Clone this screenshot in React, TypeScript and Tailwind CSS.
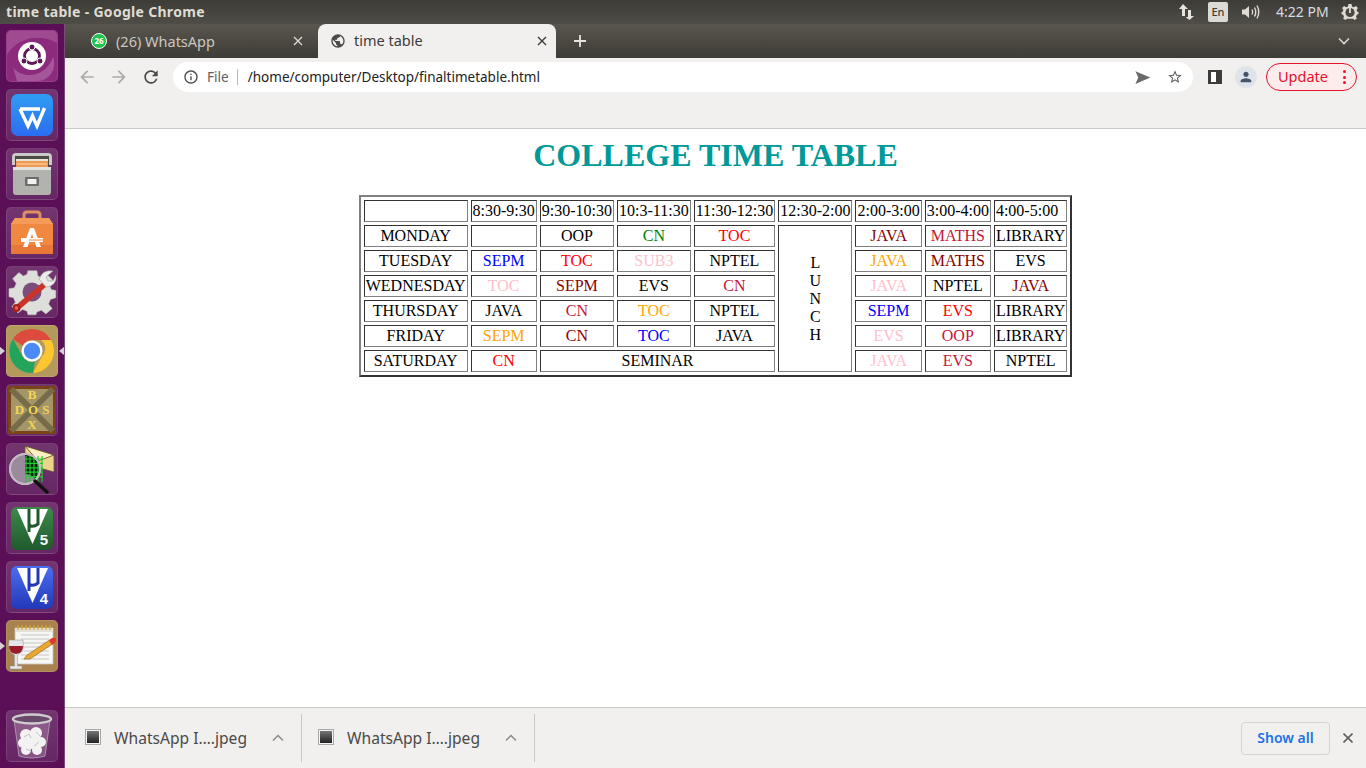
import React from 'react';

const BLACK = 'text-black';
const RED = 'text-[#ff0000]';
const BLUE = 'text-[#0000ff]';
const PINK = 'text-[#ffc0cb]';
const ORANGE = 'text-[#ffa500]';
const GREEN = 'text-[#008000]';
const CRIMSON = 'text-[#c4163a]';
const DARKRED = 'text-[#8b0000]';

const cellBase =
  'border border-t-[#333333] border-l-[#333333] border-r-[#808080] border-b-[#808080] p-px text-center align-middle';

type Cell = { t: string; c: string; span?: number };

const header = ['', '8:30-9:30', '9:30-10:30', '10:3-11:30', '11:30-12:30', '12:30-2:00', '2:00-3:00', '3:00-4:00', '4:00-5:00'];

const before: Cell[][] = [
  [{ t: 'MONDAY', c: BLACK }, { t: '', c: BLACK }, { t: 'OOP', c: BLACK }, { t: 'CN', c: GREEN }, { t: 'TOC', c: RED }],
  [{ t: 'TUESDAY', c: BLACK }, { t: 'SEPM', c: BLUE }, { t: 'TOC', c: RED }, { t: 'SUB3', c: PINK }, { t: 'NPTEL', c: BLACK }],
  [{ t: 'WEDNESDAY', c: BLACK }, { t: 'TOC', c: PINK }, { t: 'SEPM', c: DARKRED }, { t: 'EVS', c: BLACK }, { t: 'CN', c: CRIMSON }],
  [{ t: 'THURSDAY', c: BLACK }, { t: 'JAVA', c: BLACK }, { t: 'CN', c: CRIMSON }, { t: 'TOC', c: ORANGE }, { t: 'NPTEL', c: BLACK }],
  [{ t: 'FRIDAY', c: BLACK }, { t: 'SEPM', c: ORANGE }, { t: 'CN', c: DARKRED }, { t: 'TOC', c: BLUE }, { t: 'JAVA', c: BLACK }],
  [{ t: 'SATURDAY', c: BLACK }, { t: 'CN', c: RED }, { t: 'SEMINAR', c: BLACK, span: 3 }],
];

const after: Cell[][] = [
  [{ t: 'JAVA', c: DARKRED }, { t: 'MATHS', c: CRIMSON }, { t: 'LIBRARY', c: BLACK }],
  [{ t: 'JAVA', c: ORANGE }, { t: 'MATHS', c: DARKRED }, { t: 'EVS', c: BLACK }],
  [{ t: 'JAVA', c: PINK }, { t: 'NPTEL', c: BLACK }, { t: 'JAVA', c: DARKRED }],
  [{ t: 'SEPM', c: BLUE }, { t: 'EVS', c: RED }, { t: 'LIBRARY', c: BLACK }],
  [{ t: 'EVS', c: PINK }, { t: 'OOP', c: CRIMSON }, { t: 'LIBRARY', c: BLACK }],
  [{ t: 'JAVA', c: PINK }, { t: 'EVS', c: CRIMSON }, { t: 'NPTEL', c: BLACK }],
];

const Md = ({ d, size = 24, className = '' }: { d: string; size?: number; className?: string }) => (
  <svg width={size} height={size} viewBox="0 0 24 24" className={className} fill="currentColor">
    <path d={d} />
  </svg>
);

const Tile = ({ children, gold, pink }: { children: React.ReactNode; gold?: string; pink?: boolean }) => (
  <div
    className={
      'w-[52px] h-[52px] rounded-[5px] overflow-hidden border border-white/10 shrink-0 ' +
      (gold === 'chrome'
        ? 'bg-[#b39a5c]'
        : gold === 'note'
          ? 'bg-[#a9824f]'
          : pink
            ? 'bg-[#8c2a7c]'
            : 'bg-gradient-to-b from-[#733570] to-[#662765]')
    }
  >
    <svg width="50" height="50" viewBox="0 0 50 50">
      {children}
    </svg>
  </div>
);

const DashIcon = () => (
  <>
    <path d="M0 24 C10 6 34 2 50 12 V0 H0 Z" fill="#a04a92" />
    <path d="M6 36 C14 48 38 48 46 26 C50 36 44 50 30 50 H10 Z" fill="#a5559a" />
    <circle cx="25" cy="25" r="14" fill="#fff" />
    <circle cx="25" cy="25" r="7.5" fill="none" stroke="#5e1a58" strokeWidth="2.8" />
    <circle cx="25" cy="16" r="3" fill="#5e1a58" stroke="#fff" strokeWidth="1" />
    <circle cx="17" cy="30" r="3" fill="#5e1a58" stroke="#fff" strokeWidth="1" />
    <circle cx="33" cy="30" r="3" fill="#5e1a58" stroke="#fff" strokeWidth="1" />
  </>
);

const WpsIcon = () => (
  <>
    <defs>
      <linearGradient id="wps" x1="0" y1="0" x2="0" y2="1">
        <stop offset="0" stopColor="#2f9df4" />
        <stop offset="1" stopColor="#2b6df0" />
      </linearGradient>
    </defs>
    <rect x="4" y="4" width="42" height="42" rx="7" fill="url(#wps)" />
    <path d="M13 19 H33 M13 19 L21 36 L25.5 26 L30 36 L37.5 18" fill="none" stroke="#fff" strokeWidth="3.4" strokeLinejoin="miter" />
  </>
);

const FilesIcon = () => (
  <>
    <path d="M5 8 Q5 4 9 4 H41 Q45 4 45 8 V16 H5 Z" fill="#c9c9c6" />
    <rect x="8" y="7" width="34" height="12" fill="#4c4a47" />
    <rect x="9" y="10" width="32" height="7" fill="#e9e4d8" />
    <rect x="9" y="12" width="32" height="7" fill="#ee9a53" />
    <rect x="10" y="14.5" width="30" height="1" fill="#ffd9ad" />
    <path d="M6 21 H44 V43 Q44 46 41 46 H9 Q6 46 6 43 Z" fill="#b2b2ae" />
    <rect x="6" y="18" width="38" height="3" fill="#e2e2e0" />
    <rect x="18" y="28" width="14" height="9" rx="1" fill="#6d6d6b" />
    <rect x="20.5" y="30" width="9" height="5" rx="0.5" fill="#f1f1f0" />
  </>
);

const BagIcon = () => (
  <>
    <path d="M17 13 V7 Q17 4 20 4 H30 Q33 4 33 7 V13" fill="none" stroke="#e0905f" strokeWidth="3" />
    <path d="M8 10 H42 L46 16 V46 H4 V16 Z" fill="#f0883f" />
    <path d="M4 37 H46 V46 H4 Z" fill="#e8773a" />
    <path d="M8 10 H42 L46 16 H4 Z" fill="#f39a58" />
    <path d="M23 20 H27 L34 39 H29.5 L25 26 L20.5 39 H16 Z" fill="#fff" />
    <path d="M14 30 H36 V34 H14 Z" fill="#fff" />
    <path d="M22 31.4 H36 V32.4 H22 Z" fill="#ee8440" />
  </>
);

const ToolsIcon = () => (
  <>
    <path
      d="M21 3 H31 L32 9 L37 11 L42 7 L49 14 L45 19 L47 24 L52 25 V33 L46 35 L44 40 L48 45 L41 51 L36 47 L31 49 L30 52 H21 L20 48 L15 46 L10 50 L3 43 L7 38 L5 33 L0 32 V23 L6 22 L8 17 L4 12 L11 5 L16 9 L20 7 Z"
      fill="#dededa"
      stroke="#bcbcb8"
      strokeWidth="0.6"
      transform="translate(2 1) scale(0.9)"
    />
    <circle cx="25" cy="25" r="9.5" fill="#7c4c7c" />
    <path d="M36 15 L8 39 L12 43 L40 19 Z" fill="#c8342b" />
    <circle cx="9.5" cy="41" r="4" fill="#a8201c" />
    <circle cx="9.5" cy="41" r="1.7" fill="#e86a60" />
    <path d="M32 12 Q36 2 46 4 L39 10 L41 14 L46 14 L49 8 Q50 19 39 20 Z" fill="#ececea" stroke="#9a9a98" strokeWidth="0.6" />
  </>
);

const ChromeIcon = () => (
  <>
    <path d="M25 3 A22 22 0 0 1 44 14 H25 A11 11 0 0 0 15.4 19.6 L6 13 A22 22 0 0 1 25 3 Z" fill="#dc4b3e" />
    <path d="M44 14 A22 22 0 0 1 26 47 L35 30.5 A11 11 0 0 0 34 14 Z" fill="#fbc62f" />
    <path d="M26 47 A22 22 0 0 1 6 13 L15.6 30.5 A11 11 0 0 0 28 35.6 Z" fill="#22a55b" />
    <circle cx="25" cy="25" r="10.5" fill="#fff" />
    <circle cx="25" cy="25" r="8.2" fill="#4a8af4" />
  </>
);

const DosIcon = () => (
  <>
    <rect x="1" y="1" width="48" height="48" fill="#7d4318" />
    <rect x="4" y="4" width="42" height="42" fill="#a5966a" />
    <path d="M4 4 L46 46 M46 4 L4 46" stroke="#766c4a" strokeWidth="6" />
    <g fontFamily="Liberation Serif" fontWeight="700" fontSize="13" fill="#f5d44e" textAnchor="middle">
      <text x="25" y="14">B</text>
      <text x="27" y="29" letterSpacing="4">DOS</text>
      <text x="25" y="44">X</text>
    </g>
  </>
);

const MailIcon = () => {
  const lines = [];
  for (let i = 0; i < 5; i++) {
    lines.push(<path key={'v' + i} d={`M${19 + i * 4} 12 V38`} stroke="#19d02a" strokeWidth="1.2" />);
    lines.push(<path key={'h' + i} d={`M18 ${15 + i * 4.4} H36`} stroke="#19d02a" strokeWidth="1.2" />);
  }
  return (
    <>
      <path d="M18 2 L47 11 V28 L18 20 Z" fill="#efd28c" stroke="#6a5a2a" strokeWidth="0.8" />
      <path d="M18 2 L47 11 L31 17 Z" fill="#fbeec4" stroke="#5a4a20" strokeWidth="0.8" />
      <circle cx="18" cy="25" r="15" fill="#9a8a9c" stroke="#c4bac4" strokeWidth="2" />
      <path d="M18 11 A14 14 0 0 1 28 35 Q24 30 18 30 Z" fill="#062006" />
      <g>{lines}</g>
      <circle cx="18" cy="25" r="15" fill="none" stroke="#c4bac4" strokeWidth="2" />
      <path d="M28 37 L40 48" stroke="#111" strokeWidth="3.5" strokeLinecap="round" />
    </>
  );
};

const TorrentIcon = ({ from, to, n }: { from: string; to: string; n: string }) => (
  <>
    <defs>
      <linearGradient id={'ut' + n} x1="0" y1="0" x2="0" y2="1">
        <stop offset="0" stopColor={from} />
        <stop offset="1" stopColor={to} />
      </linearGradient>
    </defs>
    <rect x="4" y="4" width="42" height="43" rx="6" fill={`url(#ut${n})`} />
    <path d="M10 6 H41 L25.5 41 Z" fill="#fff" />
    <path d="M22 6 V29 M22 22 Q26 25 31 21 M31 6 V22" fill="none" stroke={to} strokeWidth="3" />
    <text x="37" y="42" textAnchor="middle" fontFamily="Liberation Sans" fontWeight="700" fontSize="15" fill="#fff">{n}</text>
  </>
);

const NoteIcon = () => (
  <>
    <path d="M8 7 H46 V43 H8 Z" fill="#f6f6f4" stroke="#c4c4c0" strokeWidth="0.8" />
    <path d="M8 7 H46 V11 H8 Z" fill="#e2e0d8" />
    {[11, 15, 19, 23, 27, 31, 35, 39, 43].map((x) => (
      <path key={x} d={`M${x} 4 V9`} stroke="#d4a72c" strokeWidth="1.3" />
    ))}
    {[14, 18, 22, 26, 30, 34, 38].map((y) => (
      <path key={y} d={`M14 ${y} H42`} stroke="#c6c6c2" strokeWidth="1" />
    ))}
    <path d="M20 34 L44 18 L47 22 L23 38 L17 38 Z" fill="#e8a733" stroke="#8a6020" strokeWidth="0.6" />
    <path d="M42 19.5 L45 17 Q48 16 49 18 Q49.5 20 47.5 22 L45 24 Z" fill="#e2382b" />
    <path d="M2 19 H16 Q18 31 10.5 34 V45 H15 V48 H3 V45 H7.5 V34 Q0 31 2 19 Z" fill="#e6e6ea" stroke="#8f8f8f" strokeWidth="0.5" />
    <path d="M2 25 H16 Q16 32 9 33 Q2 32 2 25 Z" fill="#9a1c2a" />
  </>
);

const TrashIcon = () => (
  <>
    <path d="M7 9 L12 45 Q25 49 38 45 L43 9" fill="#ffffff" fillOpacity="0.2" stroke="#b8a8b8" strokeWidth="0.8" />
    <ellipse cx="25" cy="8" rx="19" ry="4.5" fill="#6a4a6a" stroke="#cfcccf" strokeWidth="2.4" />
    <g fill="#f2f2f2">
      <circle cx="19" cy="24" r="6" />
      <circle cx="29" cy="22" r="6" />
      <circle cx="16" cy="32" r="5" />
      <circle cx="25" cy="31" r="7" />
      <circle cx="34" cy="31" r="5" />
      <circle cx="19" cy="39" r="5" />
      <circle cx="30" cy="39" r="5" />
    </g>
    <path d="M17 26 L22 23 L24 27 M27 35 L32 31 M19 38 L24 40 M29 21 L33 25" stroke="#c4c4c4" strokeWidth="1" fill="none" />
  </>
);

const Launcher = () => (
  <div className="w-[65px] shrink-0 bg-[#5a0f56] border-r border-[#7a4a78] flex flex-col items-center pr-px pt-[6px] pb-[6px] gap-[7px] relative">
    <Tile pink><DashIcon /></Tile>
    <Tile><WpsIcon /></Tile>
    <Tile><FilesIcon /></Tile>
    <Tile><BagIcon /></Tile>
    <Tile><ToolsIcon /></Tile>
    <Tile gold="chrome"><ChromeIcon /></Tile>
    <Tile><DosIcon /></Tile>
    <Tile><MailIcon /></Tile>
    <Tile><TorrentIcon from="#3c8a4a" to="#1f5a2c" n="5" /></Tile>
    <Tile><TorrentIcon from="#4a6ef0" to="#2238b8" n="4" /></Tile>
    <Tile gold="note"><NoteIcon /></Tile>
    <div className="mt-auto">
      <Tile><TrashIcon /></Tile>
    </div>
    <span className="absolute left-0 top-[323px] w-0 h-0 border-y-[4px] border-y-transparent border-l-[5px] border-l-[#d8d0d8]" />
    <span className="absolute right-0 top-[323px] w-0 h-0 border-y-[4px] border-y-transparent border-r-[5px] border-r-[#d8d0d8]" />
    <span className="absolute left-0 top-[618px] w-0 h-0 border-y-[4px] border-y-transparent border-l-[5px] border-l-[#d8d0d8]" />
  </div>
);

const TopPanel = () => (
  <div className="h-[24px] shrink-0 bg-gradient-to-b from-[#3d3c37] to-[#4f4d46] flex items-center pl-[6px] text-[#dfdbd2] font-['Noto_Sans',sans-serif]">
    <span className="text-[14px] font-bold leading-[24px] tracking-[0.3px]">time table - Google Chrome</span>
    <div className="ml-auto flex items-center">
      <svg width="18" height="18" viewBox="0 0 18 18" fill="#e8e4dc" className="mr-[12px]">
        <path d="M5 1 L10 6 H7 V13 H4 V6 H1 Z" />
        <path d="M10 7 H13 V13 H16 L11.5 17 L7.5 14 H10 Z" />
      </svg>
      <span className="w-[20px] h-[20px] rounded-[2px] bg-[#dcdad4] text-[#3c3b37] text-[11px] font-medium flex items-center justify-center mr-[13px]">
        En
      </span>
      <svg width="20" height="16" viewBox="0 0 20 16" fill="none" stroke="#dfdbd2" strokeWidth="1.4" className="mr-[15px]">
        <path d="M1 5.5 H4 L8 2 V14 L4 10.5 H1 Z" fill="#dfdbd2" stroke="none" />
        <path d="M11 5.5 Q12.5 8 11 10.5" />
        <path d="M13.5 3.5 Q16 8 13.5 12.5" />
        <path d="M16 1.5 Q19.5 8 16 14.5" />
      </svg>
      <span className="text-[14px] leading-[24px] w-[65px] whitespace-nowrap text-[#d6dbe2]">4:22 PM</span>
      <svg width="18" height="18" viewBox="0 0 18 18" className="mr-[7px]">
        <path
          d="M7.5 1 H10.5 L11 3.4 L12.8 4.2 L14.9 2.9 L16.9 5 L15.6 7 L16.3 8.7 L17.5 9 V11 L15.9 11.8 L15 13.5 L15.8 15.5 L13.7 17 L12 15.7 H6 L4.3 17 L2.2 15.5 L3 13.5 L2.1 11.8 L0.5 11 V9 L1.7 8.7 L2.4 7 L1.1 5 L3.1 2.9 L5.2 4.2 L7 3.4 Z"
          fill="#dfdbd2"
        />
        <circle cx="9" cy="9.5" r="4.6" fill="#4a4843" />
        <path d="M9 4 V10" stroke="#dfdbd2" strokeWidth="1.8" />
      </svg>
    </div>
  </div>
);

const TabStrip = () => (
  <div className="h-[34px] shrink-0 bg-gradient-to-b from-[#59564e] to-[#3e3c36] flex items-end relative font-['Noto_Sans',sans-serif]">
    <div className="w-[253px] h-[34px] flex items-center pl-[26px] text-[#c9c7c1]">
      <span className="relative w-[16px] h-[16px] rounded-full bg-[#1fc24c] border border-white text-white text-[8px] font-bold leading-none flex items-center justify-center shrink-0">
        26
      </span>
      <span className="ml-[9px] text-[14.5px] leading-none whitespace-nowrap">(26) WhatsApp</span>
      <svg width="10" height="10" viewBox="0 0 10 10" className="ml-auto mr-[15px]" stroke="#d8d6d0" strokeWidth="1.4">
        <path d="M1 1 L9 9 M9 1 L1 9" />
      </svg>
    </div>
    <div className="w-[238px] h-[34px] bg-[#f1f0ee] rounded-t-[8px] flex items-center pl-[12px] text-[#3c3c3c]">
      <Md size={16} className="text-[#4a4a4a] shrink-0" d="M12 2C6.48 2 2 6.48 2 12s4.48 10 10 10 10-4.48 10-10S17.52 2 12 2zm-1 17.93c-3.95-.49-7-3.85-7-7.93 0-.62.08-1.21.21-1.79L9 15v1c0 1.1.9 2 2 2v1.93zm6.9-2.54c-.26-.81-1-1.39-1.9-1.39h-1v-3c0-.55-.45-1-1-1H8v-2h2c.55 0 1-.45 1-1V7h2c1.1 0 2-.9 2-2v-.41c2.93 1.19 5 4.06 5 7.41 0 2.08-.8 3.97-2.1 5.39z" />
      <span className="ml-[8px] text-[14.5px] leading-none whitespace-nowrap -mt-[2px]">time table</span>
      <svg width="10" height="10" viewBox="0 0 10 10" className="ml-auto mr-[9px]" stroke="#3c3c3c" strokeWidth="1.4">
        <path d="M1 1 L9 9 M9 1 L1 9" />
      </svg>
    </div>
    <svg width="14" height="14" viewBox="0 0 14 14" className="ml-[17px] mb-[10px]" stroke="#e6e4de" strokeWidth="1.8">
      <path d="M7 1 V13 M1 7 H13" />
    </svg>
    <svg width="12" height="8" viewBox="0 0 12 8" fill="none" stroke="#d8d6d0" strokeWidth="1.6" className="ml-auto mr-[16px] mb-[13px]">
      <path d="M1 1.5 L6 6.5 L11 1.5" />
    </svg>
  </div>
);

const Toolbar = () => (
  <div className="h-[38px] shrink-0 bg-[#f1f0ee] flex items-center font-['Noto_Sans',sans-serif]">
    <Md size={20} className="text-[#aaaaaa] ml-[12px]" d="M20 11H7.83l5.59-5.59L12 4l-8 8 8 8 1.41-1.41L7.83 13H20v-2z" />
    <Md size={20} className="text-[#aaaaaa] ml-[12px]" d="M4 11h12.17l-5.59-5.59L12 4l8 8-8 8-1.41-1.41L16.17 13H4v-2z" />
    <Md size={20} className="text-[#4a4a4a] ml-[12px]" d="M17.65 6.35A7.95 7.95 0 0 0 12 4c-4.42 0-7.99 3.58-7.99 8s3.57 8 7.99 8c3.73 0 6.84-2.55 7.73-6h-2.08A5.99 5.99 0 0 1 12 18c-3.31 0-6-2.69-6-6s2.69-6 6-6c1.66 0 3.14.69 4.22 1.78L13 11h7V4l-2.35 2.35z" />
    <div className="ml-[12px] w-[1020px] h-[30px] rounded-full bg-white flex items-center pl-[10px] pr-[10px]">
      <Md size={16} className="text-[#4a4a4a]" d="M11 7h2v2h-2zm0 4h2v6h-2zm1-9C6.48 2 2 6.48 2 12s4.48 10 10 10 10-4.48 10-10S17.52 2 12 2zm0 18c-4.41 0-8-3.59-8-8s3.59-8 8-8 8 3.59 8 8-3.59 8-8 8z" />
      <span className="ml-[8px] text-[13.6px] text-[#5f5f5f] leading-none">File</span>
      <span className="ml-[8px] w-px h-[16px] bg-[#b8b8b8]" />
      <span className="ml-[10px] mt-px text-[13.5px] text-[#222222] leading-none whitespace-nowrap">/home/computer/Desktop/finaltimetable.html</span>
      <Md size={17} className="text-[#6a6a6a] ml-auto" d="M2 21l21-9L2 3l4 9-4 9zm4-9h17" />
      <Md size={16} className="text-[#5f5f5f] ml-[16px]" d="M22 9.24l-7.19-.62L12 2 9.19 8.63 2 9.24l5.46 4.73L5.82 21 12 17.27 18.18 21l-1.63-7.03L22 9.24zM12 15.4l-3.76 2.27 1-4.28-3.32-2.88 4.38-.38L12 6.1l1.71 4.04 4.38.38-3.32 2.88 1 4.28L12 15.4z" />
    </div>
    <span className="ml-[15px] w-[14px] h-[14px] border-[2px] border-l-[3px] border-r-[6px] border-[#3c3c3c] bg-white" />
    <span className="ml-[13px] w-[22px] h-[22px] rounded-full bg-[#dfe3ea] flex items-center justify-center">
      <Md size={16} className="text-[#44546a]" d="M12 12c2.21 0 4-1.79 4-4s-1.79-4-4-4-4 1.79-4 4 1.79 4 4 4zm0 2c-2.67 0-8 1.34-8 4v2h16v-2c0-2.66-5.33-4-8-4z" />
    </span>
    <div className="ml-[9px] w-[91px] h-[28px] rounded-full border border-[#e3132c] bg-[#fdecec] flex items-center pl-[11px] text-[#e3132c]">
      <span className="text-[14.5px] leading-none -mt-[2px]">Update</span>
      <span className="ml-auto mr-[10px] flex flex-col gap-[2.5px]">
        <span className="w-[3px] h-[3px] rounded-full bg-[#e3132c]" />
        <span className="w-[3px] h-[3px] rounded-full bg-[#e3132c]" />
        <span className="w-[3px] h-[3px] rounded-full bg-[#e3132c]" />
      </span>
    </div>
  </div>
);

const DownloadItem = ({ className }: { className: string }) => (
  <div className={'flex items-center h-[48px] border-r border-[#c8c8c6] shrink-0 ' + className}>
    <span className="w-[16px] h-[16px] border border-[#a8a8a8] bg-[#f4f4f4] p-[1px] shrink-0 flex -mt-[2px]">
      <span className="flex-1 bg-gradient-to-b from-[#777777] to-[#222222]" />
    </span>
    <span className="ml-[13px] mt-[1px] text-[15.6px] text-[#4a4a4a] leading-none whitespace-nowrap">WhatsApp I….jpeg</span>
    <svg width="12" height="8" viewBox="0 0 12 8" fill="none" stroke="#8a8a8a" strokeWidth="1.5" className="ml-auto mr-[17px]">
      <path d="M1 6.5 L6 1.5 L11 6.5" />
    </svg>
  </div>
);

const DownloadBar = () => (
  <div className="h-[61px] shrink-0 bg-[#f1f0ee] border-t border-[#c9c9c7] flex items-center pl-[20px] font-['Noto_Sans',sans-serif]">
    <DownloadItem className="w-[217px]" />
    <DownloadItem className="w-[233px] pl-[16px]" />
    <button className="ml-auto w-[89px] h-[33px] rounded-[4px] border border-[#d5d4d2] text-[#1a73e8] text-[14px] font-semibold leading-none">
      Show all
    </button>
    <svg width="10" height="10" viewBox="0 0 10 10" stroke="#5f5f5f" strokeWidth="1.6" className="ml-[13px] mr-[13px]">
      <path d="M0.5 0.5 L9.5 9.5 M9.5 0.5 L0.5 9.5" />
    </svg>
  </div>
);

const TimeTable = () => (
  <div className="flex-1 min-h-0 bg-white pt-[8px] font-['Liberation_Serif',serif] text-[16px] leading-[18px] text-black">
    <h1 className="text-[32px] leading-[37px] font-bold text-center text-[#009999] mb-[21px]">COLLEGE TIME TABLE</h1>
    <table className="mx-auto border-separate border-spacing-[3px] border-2 border-t-[#808080] border-l-[#808080] border-r-[#333333] border-b-[#333333]">
      <tbody>
        <tr>
          {header.map((h, i) => (
            <td key={i} className={cellBase + ' text-left'}>{h}</td>
          ))}
        </tr>
        {before.map((row, r) => (
          <tr key={r}>
            {row.map((cell, i) => (
              <td key={i} colSpan={cell.span} className={cellBase + ' ' + cell.c}>{cell.t}</td>
            ))}
            {r === 0 && (
              <td rowSpan={6} className={cellBase}>
                L<br />U<br />N<br />C<br />H
              </td>
            )}
            {after[r].map((cell, i) => (
              <td key={i} className={cellBase + ' ' + cell.c}>{cell.t}</td>
            ))}
          </tr>
        ))}
      </tbody>
    </table>
  </div>
);

export default function App() {
  return (
    <div className="w-[1366px] h-[768px] overflow-hidden flex flex-col">
      <TopPanel />
      <div className="flex-1 min-h-0 flex">
        <Launcher />
        <div className="flex-1 min-w-0 flex flex-col">
          <TabStrip />
          <Toolbar />
          <div className="h-[33px] shrink-0 bg-[#f1f0ee] border-b border-[#c9c9c7]" />
          <TimeTable />
          <DownloadBar />
        </div>
      </div>
    </div>
  );
}
